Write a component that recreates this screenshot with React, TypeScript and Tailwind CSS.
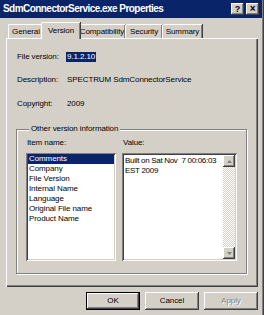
import React from "react";

const raised =
  "shadow-[inset_-1px_-1px_#404040,inset_1px_1px_#ffffff,inset_-2px_-2px_#808080,inset_2px_2px_#d4d0c8]";
const sunken =
  "shadow-[inset_1px_1px_#808080,inset_-1px_-1px_#ffffff,inset_2px_2px_#404040,inset_-2px_-2px_#d4d0c8]";

function Tab({ label, active, w }: { label: string; active?: boolean; w: string }) {
  if (active) {
    return (
      <div
        className={`relative z-10 ${w} h-[17px] -mb-px -mx-[2px] bg-[#d4d0c8] flex items-center justify-center border-l border-t border-white rounded-tl-[2px] shadow-[inset_-1px_0_#808080,1px_0_#404040]`}
      >
        {label}
      </div>
    );
  }
  return (
    <div
      className={`${w} h-[14px] bg-[#d4d0c8] flex items-center justify-center border-l border-t border-white rounded-tl-[2px] shadow-[inset_-1px_0_#808080,1px_0_#404040]`}
    >
      {label}
    </div>
  );
}

function Btn({ label, def, disabled }: { label: string; def?: boolean; disabled?: boolean }) {
  return (
    <div
      className={`w-[54px] h-[18px] flex items-center justify-center ${
        def
          ? "border border-black shadow-[inset_-1px_-1px_#404040,inset_1px_1px_#ffffff,inset_-2px_-2px_#808080]"
          : raised
      } ${disabled ? "text-[#808080] [text-shadow:1px_1px_#ffffff]" : "text-black"}`}
    >
      {label}
    </div>
  );
}

export default function App() {
  const items = [
    "Comments",
    "Company",
    "File Version",
    "Internal Name",
    "Language",
    "Original File name",
    "Product Name",
  ];
  return (
    <div
      className="w-[264px] h-[315px] bg-[#d4d0c8] overflow-hidden text-[8px] leading-[10px] tracking-[-0.1px] text-black shadow-[inset_-1px_0_#404040,inset_-2px_0_#808080]"
      style={{ fontFamily: "'Liberation Sans', Arial, sans-serif" }}
    >
      {/* Title bar */}
      <div className="h-[18px] w-[262px] bg-[#0a246a] flex items-center pl-[3px] pr-[3px]">
        <span className="flex-1 text-white font-bold text-[10px] leading-[12px] tracking-[-0.55px]">
          SdmConnectorService.exe Properties
        </span>
        <div className="flex gap-[2px]">
          <div className={`w-[13px] h-[12px] bg-[#d4d0c8] ${raised} flex items-center justify-center font-bold text-[9px] text-black`}>
            ?
          </div>
          <div className={`w-[13px] h-[12px] bg-[#d4d0c8] ${raised} flex items-center justify-center font-bold text-[10px] text-black`}>
            ×
          </div>
        </div>
      </div>

      <div className="pl-[6px] pr-[6px] pt-[3px]">
        {/* Tabs */}
        <div className="flex items-end h-[17px] pl-[2px]">
          <Tab label="General" w="w-[35px]" />
          <Tab label="Version" active w="w-[39px]" />
          <Tab label="Compatibility" w="w-[47px]" />
          <Tab label="Security" w="w-[37px]" />
          <Tab label="Summary" w="w-[40px]" />
        </div>

        {/* Panel */}
        <div className="w-[252px] h-[249px] border-l border-t border-white shadow-[inset_-1px_-1px_#404040,inset_-2px_-2px_#808080] pt-[12px]">
          <div className="flex items-center h-[12px] pl-[10px]">
            <span className="w-[49px]">File version:</span>
            <span className="bg-[#0a246a] text-white px-[1px] h-[10px] leading-[10px]">9.1.2.10</span>
          </div>
          <div className="flex items-center h-[12px] pl-[10px] mt-[11px]">
            <span className="w-[49px]">Description:</span>
            <span className="pl-[1px]">SPECTRUM SdmConnectorService</span>
          </div>
          <div className="flex items-center h-[12px] pl-[10px] mt-[12px]">
            <span className="w-[49px]">Copyright:</span>
            <span className="pl-[1px]">2009</span>
          </div>

          <fieldset className="ml-[9px] mt-[14px] w-[230px] h-[150px] border border-[#808080] shadow-[inset_1px_1px_#ffffff,1px_1px_#ffffff] px-[9px]">
            <legend className="ml-[3px] px-[2px] bg-[#d4d0c8] leading-[10px]">Other version information</legend>
            <div className="flex gap-[6px] mt-[4px]">
              <div className="w-[90px]">
                <div className="h-[10px] pl-[1px]">Item name:</div>
                <div className={`mt-[5px] h-[108px] bg-white ${sunken} p-[2px] pt-[1px]`}>
                  {items.map((it, i) => (
                    <div
                      key={it}
                      className={`h-[10px] leading-[10px] pl-[1px] ${
                        i === 0 ? "bg-[#0a246a] text-white" : ""
                      }`}
                    >
                      {it}
                    </div>
                  ))}
                </div>
              </div>
              <div className="w-[115px]">
                <div className="h-[10px] pl-[1px]">Value:</div>
                <div className={`mt-[5px] h-[108px] bg-white ${sunken} p-[2px] flex`}>
                  <div className="flex-1 pl-[1px] pt-[1px] leading-[10px] tracking-[-0.3px] whitespace-pre overflow-hidden">
                    <div>Built on Sat Nov  7 00:06:03</div>
                    <div>EST 2009</div>
                  </div>
                  <div className="w-[12px] flex flex-col bg-[repeating-conic-gradient(#d4d0c8_0_25%,#ffffff_0_50%)] bg-[length:2px_2px]">
                    <div className={`h-[12px] bg-[#d4d0c8] ${raised} flex items-center justify-center`}>
                      <svg width="5" height="3" viewBox="0 0 5 3"><path d="M2.5 0L5 3H0z" fill="#808080" /></svg>
                    </div>
                    <div className="flex-1" />
                    <div className={`h-[12px] bg-[#d4d0c8] ${raised} flex items-center justify-center`}>
                      <svg width="5" height="3" viewBox="0 0 5 3"><path d="M0 0H5L2.5 3z" fill="#808080" /></svg>
                    </div>
                  </div>
                </div>
              </div>
            </div>
          </fieldset>
        </div>

        {/* Buttons */}
        <div className="flex justify-end gap-[5px] mt-[5px]">
          <Btn label="OK" def />
          <Btn label="Cancel" />
          <Btn label="Apply" disabled />
        </div>
      </div>
    </div>
  );
}
